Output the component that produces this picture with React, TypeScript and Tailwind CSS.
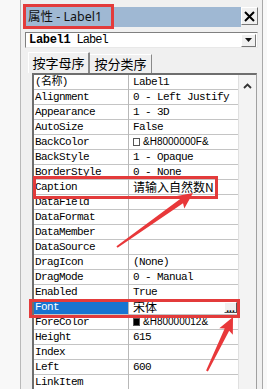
const mono = { fontFamily: '"Liberation Mono", "Noto Sans CJK SC", monospace' }

type Row = { name: string; value: string; swatch?: string; cjk?: boolean; selected?: boolean; button?: boolean }

const rows: Row[] = [
  { name: '(名称)', value: 'Label1' },
  { name: 'Alignment', value: '0 - Left Justify' },
  { name: 'Appearance', value: '1 - 3D' },
  { name: 'AutoSize', value: 'False' },
  { name: 'BackColor', value: '&H8000000F&', swatch: 'bg-white' },
  { name: 'BackStyle', value: '1 - Opaque' },
  { name: 'BorderStyle', value: '0 - None' },
  { name: 'Caption', value: '请输入自然数N', cjk: true },
  { name: 'DataField', value: '' },
  { name: 'DataFormat', value: '' },
  { name: 'DataMember', value: '' },
  { name: 'DataSource', value: '' },
  { name: 'DragIcon', value: '(None)' },
  { name: 'DragMode', value: '0 - Manual' },
  { name: 'Enabled', value: 'True' },
  { name: 'Font', value: '宋体', cjk: true, selected: true, button: true },
  { name: 'ForeColor', value: '&H80000012&', swatch: 'bg-black' },
  { name: 'Height', value: '615' },
  { name: 'Index', value: '' },
  { name: 'Left', value: '600' },
  { name: 'LinkItem', value: '' },
]

function PropRow({ row }: { row: Row }) {
  return (
    <div className="flex h-[15px] shrink-0">
      <div
        className={`w-[94px] pl-[1px] border-b border-[#c4c4c4] text-[11px] leading-[14px] tracking-[-0.6px] whitespace-nowrap overflow-hidden ${
          row.selected ? 'bg-[#1874d0] text-white' : 'text-black'
        }`}
        style={mono}
      >
        {row.name}
      </div>
      <div className="w-[1px] bg-[#b8b8b8]" />
      <div className="w-[109px] flex items-center pl-[4px] border-b border-[#c4c4c4] whitespace-nowrap text-black">
        {row.swatch && (
          <span className={`w-[7px] h-[8px] border border-[#555] mr-[3px] shrink-0 ${row.swatch}`} />
        )}
        {row.cjk ? (
          <span
            className="text-[12px] leading-[12px] flex-1"
            style={{ fontFamily: '"Noto Sans CJK SC", sans-serif' }}
          >
            {row.value}
          </span>
        ) : row.swatch ? (
          <span className="text-[10px] leading-[14px]" style={{ fontFamily: '"Liberation Sans", sans-serif' }}>
            {row.value}
          </span>
        ) : (
          <span className="text-[11px] leading-[14px] tracking-[-0.6px]" style={mono}>
            {row.value}
          </span>
        )}
        {row.button && (
          <span className="w-[13px] h-[11px] mr-[1px] bg-[#f0f0f0] border border-t-white border-l-white border-r-[#555] border-b-[#555] flex items-end justify-center text-[10px] leading-[8px] font-bold">
            ...
          </span>
        )}
      </div>
    </div>
  )
}

function Arrow({ x1, y1, x2, y2 }: { x1: number; y1: number; x2: number; y2: number }) {
  const len = Math.hypot(x2 - x1, y2 - y1)
  const ang = (Math.atan2(y2 - y1, x2 - x1) * 180) / Math.PI
  const pts = `0,-1 ${len - 14},-2.5 ${len - 16},-7.5 ${len},0 ${len - 16},7.5 ${len - 14},2.5 0,1`
  return <polygon points={pts} fill="#e8383a" transform={`translate(${x1} ${y1}) rotate(${ang})`} />
}

export default function App() {
  return (
    <div className="relative w-[267px] h-[389px] overflow-hidden flex bg-[#f0f0f0]">
      {/* left margin */}
      <div className="w-[21px] bg-[#f8f8f8] border-r border-[#b9b9b9]" />

      {/* property window */}
      <div className="w-[241px] flex flex-col pt-[7px]">
        {/* title */}
        <div className="flex ml-[4px] mr-[4px] h-[20px]">
          <div
            className="flex-1 bg-[#9fb8d3] flex items-center pl-[3px] text-[12.5px] text-[#111]"
            style={{ fontFamily: '"Noto Sans", "Noto Sans CJK SC", sans-serif' }}
          >
            属性 - Label1
          </div>
          <div className="w-[17px] h-[18px] bg-[#f0f0f0] border border-t-white border-l-white border-r-[#777] border-b-[#777] flex items-center justify-center">
            <svg width="11" height="11" viewBox="0 0 11 11">
              <path d="M1 1 L10 10 M10 1 L1 10" stroke="#000" strokeWidth="2" />
            </svg>
          </div>
        </div>

        {/* object combo */}
        <div className="mt-[5px] mx-[4px] h-[16px] bg-white border border-t-[#808080] border-l-[#808080] border-r-[#e8e8e8] border-b-[#e8e8e8] flex items-center">
          <div className="flex-1 pl-[3px] text-[12px] leading-[14px] whitespace-nowrap" style={{ fontFamily: '"Liberation Mono", monospace' }}>
            <span className="font-bold tracking-[-0.3px]">Label1</span>
            <span className="tracking-[-1px]"> Label</span>
          </div>
          <div className="w-[15px] h-[13px] mr-[1px] bg-[#f0f0f0] border border-t-white border-l-white border-r-[#777] border-b-[#777] flex items-center justify-center">
            <svg width="7" height="4" viewBox="0 0 7 4">
              <path d="M0 0 H7 L3.5 4 Z" fill="#111" />
            </svg>
          </div>
        </div>

        {/* tabs */}
        <div
          className="mt-[4px] ml-[7px] h-[21px] flex items-stretch text-[13px] text-black"
          style={{ fontFamily: '"Noto Sans CJK SC", sans-serif' }}
        >
          <div className="w-[62px] border-l border-t border-r-2 border-l-white border-t-white border-r-[#8a8a8a] flex items-center justify-center rounded-t-[1px]">
            按字母序
          </div>
          <div className="w-[62px] mt-[2px] border-t border-r border-t-white border-r-[#8a8a8a] flex items-center justify-center">
            按分类序
          </div>
        </div>

        {/* grid */}
        <div className="ml-[11px] w-[225px] flex-1 flex border-l-2 border-t-2 border-[#6e6e6e] border-r border-r-[#a0a0a0] bg-white overflow-hidden">
          <div className="flex flex-col">
            {rows.map((r) => (
              <PropRow key={r.name} row={r} />
            ))}
          </div>
          <div className="w-[18px] bg-[#f3f3f3] border-l border-[#e0e0e0] flex flex-col items-center">
            <svg className="mt-[8px]" width="9" height="6" viewBox="0 0 9 6">
              <path d="M1 5 L4.5 1.5 L8 5" stroke="#333" strokeWidth="1.8" fill="none" />
            </svg>
          </div>
        </div>
      </div>

      {/* right margin */}
      <div className="w-[5px] bg-[#f8f8f8] border-l border-[#a8a8a8]" />

      {/* annotations */}
      <svg className="absolute inset-0 pointer-events-none" width="267" height="389" viewBox="0 0 267 389">
        <rect x="24.5" y="5.5" width="88" height="22" fill="none" stroke="#e33b3b" strokeWidth="3" />
        <rect x="34.5" y="177.5" width="182" height="20" fill="none" stroke="#e33b3b" strokeWidth="3" />
        <rect x="30.5" y="300.5" width="208" height="16" fill="none" stroke="#e33b3b" strokeWidth="3" />
        <Arrow x1={117} y1={247} x2={193} y2={193} />
        <Arrow x1={207} y1={371} x2={233} y2={317} />
      </svg>
    </div>
  )
}
